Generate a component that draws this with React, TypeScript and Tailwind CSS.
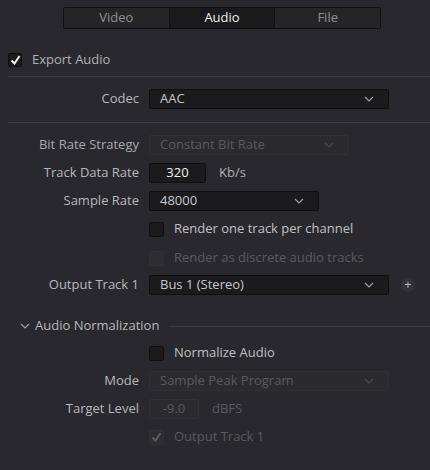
import React from "react";

const Chevron = ({ dim }: { dim?: boolean }) => (
  <svg width="10" height="6" viewBox="0 0 10 6" className={dim ? "text-[#4a4a50]" : "text-[#a0a0a4]"}>
    <path d="M1 1l4 4 4-4" fill="none" stroke="currentColor" strokeWidth="1.2" />
  </svg>
);

function Row({ label, dim, className, children }: { label?: string; dim?: boolean; className?: string; children: React.ReactNode }) {
  return (
    <div className={`flex items-center h-[20px] ${className ?? ""}`}>
      <div className={`w-[139px] shrink-0 text-right pr-0 ${dim ? "text-[#a9a9ad]" : "text-[#b8b8bc]"}`}>{label}</div>
      <div className="ml-[10px] flex items-center">{children}</div>
    </div>
  );
}

function Select({ value, w, dim }: { value: string; w: string; dim?: boolean }) {
  return (
    <div className={`${w} h-[20px] flex items-center justify-between pl-[10px] pr-[14px] rounded-[2px] border ${dim ? "border-[#303036] bg-[#2a2a2f] text-[#5a5a60]" : "border-[#0f0f11] bg-[#1b1b1d] text-[#c8c8cc]"}`}>
      <span>{value}</span>
      <Chevron dim={dim} />
    </div>
  );
}

function Check({ checked, dim, label }: { checked?: boolean; dim?: boolean; label: string }) {
  return (
    <div className="flex items-center gap-[10px]">
      <div className={`w-[15px] h-[15px] rounded-[2px] flex items-center justify-center ${dim ? "bg-[#2c2c31] border border-[#303036]" : "bg-[#1b1b1d] border border-[#0f0f11]"}`}>
        {checked && (
          <svg width="11" height="10" viewBox="0 0 11 10">
            <path d="M1.5 5.5l3 3 5-7.5" fill="none" stroke={dim ? "#5a5a60" : "#f0f0f0"} strokeWidth="2" />
          </svg>
        )}
      </div>
      <span className={dim ? "text-[#5a5a60]" : "text-[#c0c0c4]"}>{label}</span>
    </div>
  );
}

export default function App() {
  return (
    <div className="w-[430px] h-[470px] bg-[#28282e] text-[13px] overflow-hidden" style={{ fontFamily: '"Open Sans", "Liberation Sans", sans-serif' }}>
      <div className="pt-[7px] pl-[63px] flex">
        <div className="flex h-[22px] w-[318px] border border-[#111113] rounded-[2px] bg-[#252528]">
          <div className="flex-1 flex items-center justify-center text-[#909094] border-r border-[#111113]">Video</div>
          <div className="flex-1 flex items-center justify-center text-[#f0f0f0] bg-[#1a1a1c] border-r border-[#111113]">Audio</div>
          <div className="flex-1 flex items-center justify-center text-[#909094]">File</div>
        </div>
      </div>

      <div className="mt-[23px] ml-[8px] flex items-center gap-[10px] h-[16px]">
        <div className="w-[14px] h-[14px] rounded-[2px] bg-[#1b1b1d] border border-[#0f0f11] flex items-center justify-center">
          <svg width="11" height="10" viewBox="0 0 11 10"><path d="M1.5 5.5l3 3 5-7.5" fill="none" stroke="#f0f0f0" strokeWidth="2" /></svg>
        </div>
        <span className="text-[#b0b0b4]">Export Audio</span>
      </div>
      <div className="ml-[8px] mt-[8px] h-px bg-[#3e3e44]" />

      <Row label="Codec" className="mt-[12px]"><Select value="AAC" w="w-[240px]" /></Row>
      <div className="ml-[8px] mt-[13px] h-px bg-[#3e3e44]" />

      <Row label="Bit Rate Strategy" dim className="mt-[12px]"><Select value="Constant Bit Rate" w="w-[200px]" dim /></Row>
      <Row label="Track Data Rate" className="mt-[8px]">
        <div className="w-[57px] h-[20px] rounded-[2px] border border-[#0f0f11] bg-[#1b1b1d] text-[#f0f0f0] flex items-center justify-center">320</div>
        <span className="ml-[13px] text-[#b0b0b4]">Kb/s</span>
      </Row>
      <Row label="Sample Rate" className="mt-[8px]"><Select value="48000" w="w-[170px]" /></Row>
      <Row className="mt-[8px]"><Check label="Render one track per channel" /></Row>
      <Row className="mt-[9px]"><Check dim label="Render as discrete audio tracks" /></Row>
      <Row label="Output Track 1" className="mt-[7px]">
        <Select value="Bus 1 (Stereo)" w="w-[240px]" />
        <div className="ml-[12px] w-[14px] h-[14px] rounded-full bg-[#323238] flex items-center justify-center text-[#c0c0c4] text-[12px] leading-none">+</div>
      </Row>

      <div className="mt-[21px] flex items-center h-[20px]">
        <div className="ml-[20px]"><Chevron /></div>
        <span className="ml-[5px] text-[#b8b8bc]">Audio Normalization</span>
        <div className="ml-[10px] flex-1 h-px bg-[#3e3e44]" />
      </div>
      <Row className="mt-[7px]"><Check label="Normalize Audio" /></Row>
      <Row label="Mode" className="mt-[8px]"><Select value="Sample Peak Program" w="w-[240px]" dim /></Row>
      <Row label="Target Level" className="mt-[8px]">
        <div className="w-[50px] h-[20px] rounded-[2px] border border-[#303036] bg-[#2a2a2f] text-[#5a5a60] flex items-center justify-center">-9.0</div>
        <span className="ml-[13px] text-[#5a5a60]">dBFS</span>
      </Row>
      <Row className="mt-[8px]"><Check checked dim label="Output Track 1" /></Row>
    </div>
  );
}
